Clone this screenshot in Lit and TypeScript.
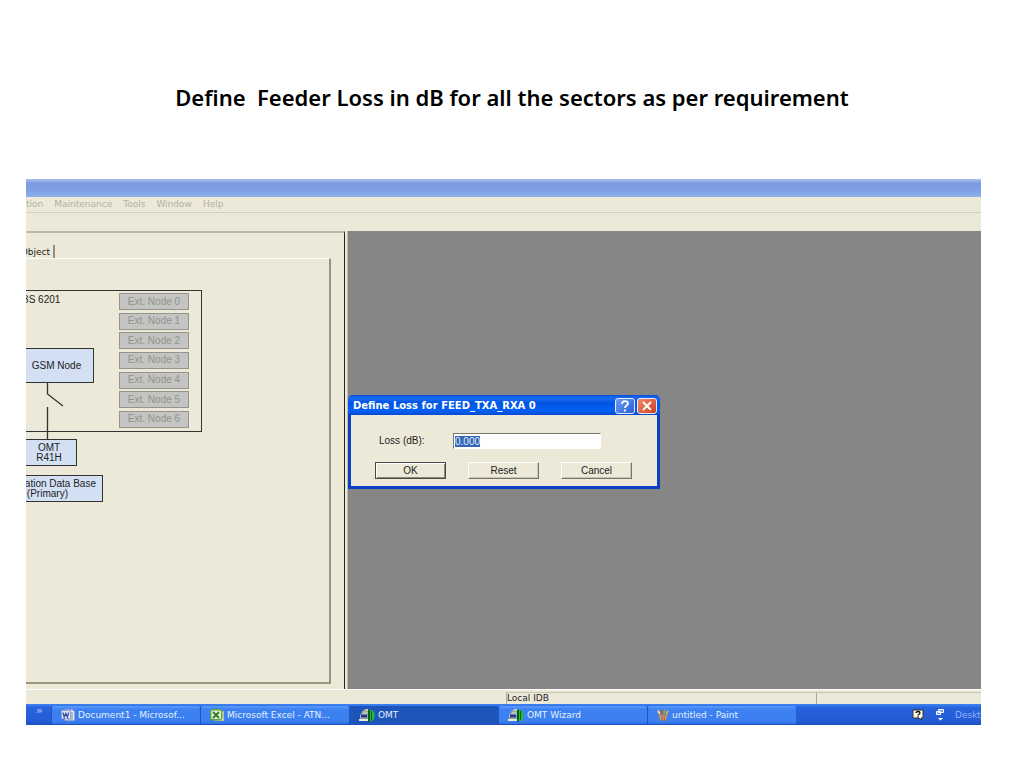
import { LitElement, html, css, svg } from "lit";
import { customElement, property } from "lit/decorators.js";

const wordIcon = svg`<svg viewBox="0 0 14 12" width="14" height="12" aria-hidden="true">
  <path d="M4 .5h7l2.5 2v9H4z" fill="#e4e8f6" stroke="#8fa3d8"/>
  <path d="M9 4h3M9 6h3M9 8h3M6 10h6" stroke="#7a84a8"/>
  <rect x=".5" y="1.500" width="9" height="8" fill="#dfe6f8" stroke="#8ea2d6"/>
  <path d="M2 3.500l1.200 4.500 1.600-3.600L6.400 8l1.300-4.500" fill="none" stroke="#34509c" stroke-width="1.300"/></svg>`;
const excelIcon = svg`<svg viewBox="0 0 14 12" width="14" height="12" aria-hidden="true">
  <rect x="5" y="2.500" width="8.500" height="9" fill="#f4f8ee" stroke="#b0c4a4"/>
  <path d="M10 5h3M10 7h3M9 9h4" stroke="#a7bf98"/>
  <rect x=".7" y=".7" width="11" height="10" rx="2" fill="#e4f3d6" stroke="#5fa048" stroke-width="1.400"/>
  <path d="M3 3l6 6M9 3L3 9" stroke="#2f7a2c" stroke-width="1.900"/></svg>`;
const omtIcon = svg`<svg viewBox="0 0 16 13" width="16" height="13" aria-hidden="true">
  <path d="M3.500 2L7 0h3v9l-3 2H1V7z" fill="#d4dccb"/>
  <path d="M4 2h5.500L8.500 9.500H1.500z" fill="#b4c8b8" stroke="#617a6a" stroke-width=".6"/>
  <rect x="2" y="5.500" width="6" height="3" fill="#27359a"/>
  <path d="M0 11h9" stroke="#e8ecdf" stroke-width="1.800"/>
  <path d="M9 0l3 1.500v10L9 13z" fill="#0b5c1c"/>
  <path d="M11 1c4 0 4.500 2.500 4.500 5.500s-.5 5-4.500 5.500z" fill="#27ba3a"/>
  <path d="M12.500 2v9" stroke="#08621a"/></svg>`;
const paintIcon = svg`<svg viewBox="0 0 12 12" width="12" height="12" aria-hidden="true">
  <path d="M1 1.500l3.500 7" stroke="#f0d4a8" stroke-width="2"/>
  <path d="M4.500 1v7" stroke="#c94a33" stroke-width="1.600"/>
  <path d="M7.500 .5L6.500 8" stroke="#72b04a" stroke-width="1.800"/>
  <path d="M10.800 1.500L8 9" stroke="#e7ad45" stroke-width="2"/>
  <path d="M1.500 5.500h9l-1.500 6H3z" fill="#c4b39a" stroke="#7c6652" stroke-width=".6"/>
  <path d="M4 6l.5 5M6 6v5M8 6l-.5 5" stroke="#a4563a" stroke-width=".9"/></svg>`;

@customElement("loss-dialog")
export class LossDialog extends LitElement {
  static styles = css`
    :host { display: block; box-sizing: border-box; width: 312px; padding: 0 3px 3px;
      background: #0a3fc4; border-radius: 5px 5px 0 0;
      font-family: "Liberation Sans", Arial, sans-serif; font-size: 10px; line-height: 12px; color: #222; }
    .bar { display: flex; align-items: center; gap: 2px; height: 20px; margin: 0 -3px; padding: 1px 3px 0 5px; box-sizing: border-box;
      border-radius: 5px 5px 0 0; background: linear-gradient(#0a4fd8, #1a6cf4 15%, #0355e2 40%, #0560f4 80%, #0348cc); }
    .title { flex: 1; margin: 0; color: #fff; font: bold 10px/14px "DejaVu Sans", Verdana, sans-serif; }
    .cap { display: flex; box-sizing: border-box; width: 20px; height: 16px; padding: 0; border: 1px solid #e4ecff; border-radius: 3px;
      align-items: center; justify-content: center; background: linear-gradient(135deg, #6c9bf4, #2a5fd8); }
    .close { background: linear-gradient(135deg, #ee8a6c, #cf3f1c); }
    .body { background: #ece9d8; padding: 18px 24px 7px; }
    .row { display: flex; align-items: center; }
    .row label { width: 78px; padding-left: 4px; box-sizing: border-box; }
    input { box-sizing: border-box; width: 148px; height: 16px; padding: 0 1px; font: inherit; color: #222;
      border: 1px solid; border-color: #77756a #fff #fff #77756a; background: #fff; outline: none; border-radius: 0; }
    input::selection { background: #3566b4; color: #e4edff; }
    .actions { display: flex; gap: 22px; margin-top: 13px; }
    .actions button { box-sizing: border-box; width: 71px; height: 17px; padding: 0; font: inherit; color: #222;
      background: #ece9d8; border: 1px solid; border-color: #fff #77756a #77756a #fff; box-shadow: inset -1px -1px #c9c6b4; border-radius: 0; }
    .actions .default { border: 1px solid #4a4944; box-shadow: inset 1px 1px #fff, inset -1px -1px #8b897b; }
  `;
  firstUpdated() {
    const box = this.renderRoot.querySelector("input")!;
    box.focus();
    box.select();
  }
  render() {
    return html`
      <div class="bar">
        <h2 class="title">Define Loss for FEED_TXA_RXA 0</h2>
        <button class="cap" aria-label="Help"><svg width="10" height="12" viewBox="0 0 10 12"><path d="M2 4c0-4 6-3.500 6-.6C8 5.500 5 5.500 5 8M5 9.500v2" fill="none" stroke="#fff" stroke-width="1.800"/></svg></button>
        <button class="cap close" aria-label="Close"><svg width="10" height="10" viewBox="0 0 10 10"><path d="M1 1l8 8M9 1L1 9" stroke="#fff" stroke-width="1.900"/></svg></button>
      </div>
      <div class="body">
        <div class="row"><label for="loss">Loss (dB):</label><input id="loss" type="text" .value=${"0.000"} /></div>
        <div class="actions"><button class="default">OK</button><button>Reset</button><button>Cancel</button></div>
      </div>`;
  }
}

@customElement("site-diagram")
export class SiteDiagram extends LitElement {
  @property({ type: Array }) nodes = [0, 1, 2, 3, 4, 5, 6];
  static styles = css`
    :host { display: block; position: relative; height: 100%; color: #222; font: 10px/10px "Liberation Sans", Arial, sans-serif; }
    .cabinet { position: absolute; left: 0; top: 31px; width: 176px; height: 142px; box-sizing: border-box;
      border: 1px solid #333; border-left: 0; }
    .name { position: absolute; left: -4px; top: 4px; }
    .ext { position: absolute; left: 93px; top: 2px; width: 70px; height: 135px; display: flex; flex-direction: column; justify-content: space-between; }
    .ext button { height: 17px; padding: 0; border: 1px solid #94938e; background: #c4c4c2; color: #92928f; font: inherit; border-radius: 0; }
    .node { position: absolute; left: 0; box-sizing: border-box; display: flex; align-items: center; justify-content: center;
      text-align: center; white-space: nowrap; border: 1px solid #333; border-left: 0; background: #d3e0f4; }
    .gsm { top: 89px; width: 68px; height: 35px; padding-right: 6px; }
    .omt { top: 180px; width: 51px; height: 27px; padding-right: 4px; }
    .idb { top: 216px; width: 77px; height: 27px; padding-right: 6px; justify-content: flex-end; }
    .idb small { display: block; font-size: 10px; padding-right: 26px; }
    .wire { position: absolute; left: 0; top: 124px; }
  `;
  render() {
    return html`
      <div class="cabinet"><span class="name">BS 6201</span>
        <div class="ext">${this.nodes.map((n) => html`<button disabled>Ext. Node ${n}</button>`)}</div>
      </div>
      <svg class="wire" width="60" height="56" viewBox="0 0 60 56" aria-hidden="true">
        <path d="M21.500 0v11l15.500 12M21.500 24v32" fill="none" stroke="#333" stroke-width="1.300"/></svg>
      <div class="node gsm">GSM Node</div>
      <div class="node omt">OMT<br />R41H</div>
      <div class="node idb"><span>ation Data Base<small>(Primary)</small></span></div>`;
  }
}

@customElement("app-root")
export class AppRoot extends LitElement {
  static styles = css`
    :host { display: block; min-height: 100vh; box-sizing: border-box; padding: 80px 43px 43px 26px; background: #fff;
      font-family: "DejaVu Sans", Verdana, sans-serif; font-size: 9px; line-height: 12px; color: #222; }
    .heading { margin: 0 0 65px; padding-left: 17px; text-align: center; white-space: pre-wrap; color: #000;
      font: 600 22px/34px "Noto Sans", "Open Sans", sans-serif; }
    .screen { background: #ece9d8; overflow: hidden; }
    .caption { height: 18px; background: linear-gradient(#a9bff0, #7c9be2 25%, #7f9fe4 60%, #8db2ee); }
    .menu { display: flex; gap: 11px; height: 15px; line-height: 14px; border-bottom: 1px solid #d2cfbf; }
    .menu a { color: #b3b1a2; text-decoration: none; }
    .tools { height: 18px; }
    .work { display: flex; height: 458px; }
    .side { width: 319px; box-sizing: border-box; display: flex; flex-direction: column; border-top: 2px solid #bcb9a8;
      border-right: 1px solid #222; padding: 12px 13px 5px 0; }
    .tab { display: flex; justify-content: flex-end; box-sizing: border-box; width: 29px; height: 13px; margin: 0; overflow: hidden; padding-right: 3px;
      line-height: 14px; border-right: 2px solid #8f8d7e; }
    .page { flex: 1; min-height: 0; border-top: 1px solid #fff; border-right: 2px solid #98967f; border-bottom: 2px solid #98967f; }
    .area { position: relative; flex: 1; margin-left: 3px; background: #868686; box-shadow: -1px 0 #b9b7a8; }
    loss-dialog { position: absolute; left: 0; top: 164px; }
    .status { display: grid; grid-template-columns: 480fr 310fr 165fr; height: 15px; padding-top: 2px; border-top: 1px solid #fff; box-sizing: border-box; }
    .cell { border-left: 1px solid #aaa897; border-top: 1px solid #c7c4b3; line-height: 10px; }
    .cell:first-child { border: 0; }
    .taskbar { display: flex; height: 21px; background: linear-gradient(#3f83f0, #2862dc 18%, #245bd8 80%, #1f4fc0); color: #fff; }
    .more { width: 25px; box-sizing: border-box; padding-left: 10px; line-height: 14px; font-size: 11px; color: #b8d0ff; }
    .task { flex: 0 1 149px; min-width: 0; display: flex; align-items: center; gap: 3px; margin: 2px 0 1px; padding: 0 9px; white-space: nowrap; overflow: hidden;
      border: 0; border-left: 1px solid #1f54c4; border-radius: 2px; background: linear-gradient(#5a9bfa, #3c81f2 20%, #3b7ff0 85%, #306fe0); color: #e7f0ff; font: inherit; }
    .task svg { flex: none; }
    .active { background: #1e55bb; }
    .tray { flex: 1; display: flex; align-items: center; justify-content: flex-end; gap: 10px; overflow: hidden; }
    .desk { width: 26px; overflow: hidden; color: #8fb4f8; }
  `;
  render() {
    const tasks = [
      { icon: wordIcon, text: "Document1 - Microsof..." },
      { icon: excelIcon, text: "Microsoft Excel - ATN..." },
      { icon: omtIcon, text: "OMT", active: true },
      { icon: omtIcon, text: "OMT Wizard" },
      { icon: paintIcon, text: "untitled - Paint" },
    ];
    return html`
      <h1 class="heading">Define  Feeder Loss in dB for all the sectors as per requirement</h1>
      <main class="screen">
        <div class="caption"></div>
        <nav class="menu">${["tion", "Maintenance", "Tools", "Window", "Help"].map((m) => html`<a href="#">${m}</a>`)}</nav>
        <div class="tools"></div>
        <div class="work">
          <section class="side">
            <div class="tab"><span>Object</span></div>
            <div class="page"><site-diagram></site-diagram></div>
          </section>
          <section class="area"><loss-dialog role="dialog"></loss-dialog></section>
        </div>
        <div class="status"><div class="cell"></div><div class="cell">Local IDB</div><div class="cell"></div></div>
        <div class="taskbar">
          <span class="more">»</span>
          ${tasks.map((t) => html`<button class="task ${t.active ? "active" : ""}">${t.icon}<span>${t.text}</span></button>`)}
          <div class="tray">
            <svg width="13" height="12" viewBox="0 0 13 12" aria-hidden="true"><path d="M1 1h10v8H9v2L7 9H1z" fill="#fffde4" stroke="#333"/><path d="M4 4c0-2 4-2 4 0 0 1.500-2 1-2 2.500M6 7.200v1.300" fill="none" stroke="#111" stroke-width="1.300"/></svg>
            <svg width="10" height="14" viewBox="0 0 10 14" aria-hidden="true"><path d="M3.500 1.500h5v3h-5zM1.500 3.500h4v3h-4z" fill="#6b9af0" stroke="#fff"/><path d="M3 10h5l-2.500 2.500z" fill="#fff"/></svg>
            <span class="desk">Desktop</span>
          </div>
        </div>
      </main>`;
  }
}
